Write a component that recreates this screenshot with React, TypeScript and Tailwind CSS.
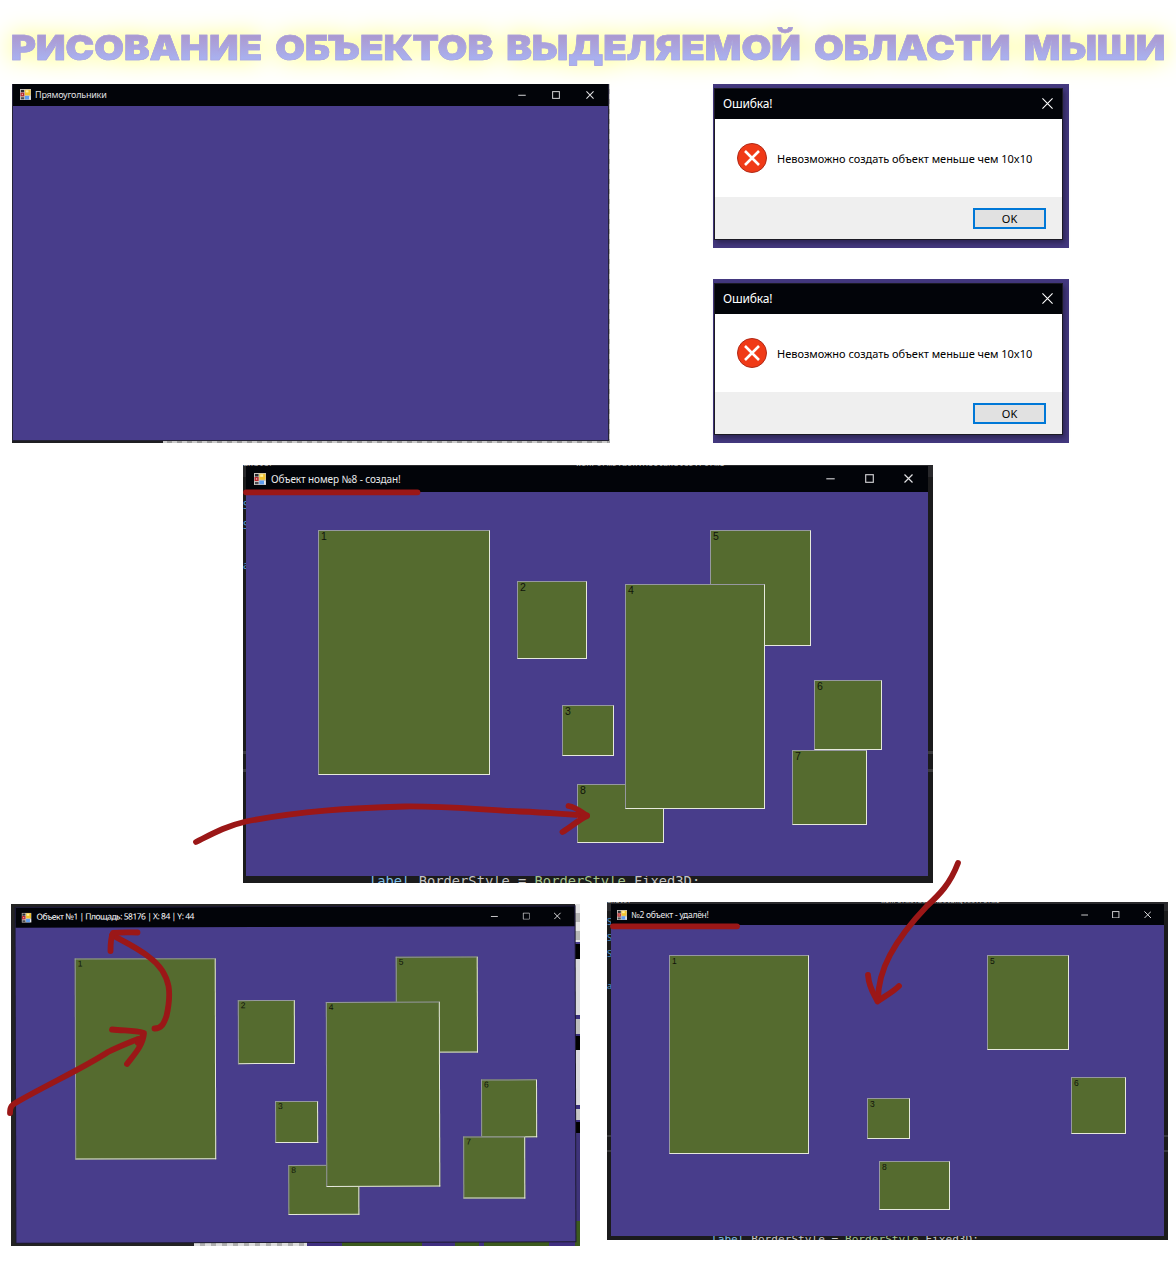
import React from "react";

type Box = { id: number; x: number; y: number; w: number; h: number };

/* Rectangles are positioned relative to the client area of their window. */
const createdBoxes: Box[] = [
  { id: 1, x: 72, y: 38, w: 172, h: 245 },
  { id: 2, x: 271, y: 89, w: 70, h: 78 },
  { id: 3, x: 316, y: 213.4, w: 52.4, h: 51 },
  { id: 5, x: 464, y: 38, w: 101, h: 116 },
  { id: 8, x: 331, y: 292, w: 87, h: 59 },
  { id: 4, x: 379, y: 92, w: 140, h: 225 },
  { id: 6, x: 568, y: 188, w: 68, h: 70 },
  { id: 7, x: 546, y: 258, w: 75, h: 75 },
];

const areaBoxes: Box[] = [
  { id: 1, x: 59, y: 31, w: 141, h: 201 },
  { id: 2, x: 222, y: 73, w: 57, h: 64 },
  { id: 3, x: 259, y: 174, w: 43, h: 42 },
  { id: 5, x: 380, y: 30, w: 82, h: 96 },
  { id: 8, x: 272, y: 238, w: 71, h: 50 },
  { id: 4, x: 310, y: 75, w: 114, h: 185 },
  { id: 6, x: 465, y: 153, w: 56, h: 58 },
  { id: 7, x: 447, y: 210, w: 62, h: 62 },
];

const deletedBoxes: Box[] = [
  { id: 1, x: 58, y: 30, w: 140, h: 199 },
  { id: 3, x: 256, y: 173, w: 43, h: 41 },
  { id: 5, x: 376, y: 30, w: 82, h: 95 },
  { id: 6, x: 460, y: 152, w: 55, h: 57 },
  { id: 8, x: 268, y: 236, w: 71, h: 49 },
];

function FormIcon({ className }: { className: string }) {
  return (
    <svg viewBox="0 0 12 12" className={className}>
      <rect width="12" height="12" fill="#c9c4bd" />
      <rect x="1" y="1" width="3.5" height="2.5" fill="#2a2a30" />
      <rect x="0.6" y="4" width="4" height="4" fill="#b8242c" />
      <rect x="1.9" y="5.2" width="1.3" height="1.5" fill="#f3b6a8" />
      <rect x="1" y="9" width="3.5" height="2.2" fill="#4a4a52" />
      <rect x="5.4" y="0.8" width="6" height="6" rx="0.6" fill="#f2c32e" />
      <rect x="6.2" y="1.4" width="3" height="2.4" fill="#fff0a0" />
      <rect x="5.4" y="7.6" width="4.6" height="3.8" fill="#5d9cf0" />
      <rect x="10.2" y="8" width="1.3" height="3.2" fill="#e8eefb" />
    </svg>
  );
}

function WindowButtons({ size, gap, right }: { size: string; gap: string; right: string }) {
  return (
    <div className={`ml-auto flex items-center ${gap} ${right}`}>
      <svg viewBox="0 0 9 9" className={size} fill="none" stroke="#d0d0d2" strokeWidth="1.15">
        <path d="M0.3 4.8H8.7" />
      </svg>
      <svg viewBox="0 0 9 9" className={size} fill="none" stroke="#d0d0d2" strokeWidth="1.15">
        <rect x="0.7" y="0.7" width="7.6" height="7.6" />
      </svg>
      <svg viewBox="0 0 9 9" className={size} fill="none" stroke="#e2e2e4" strokeWidth="1.15">
        <path d="M0.5 0.5L8.5 8.5M8.5 0.5L0.5 8.5" />
      </svg>
    </div>
  );
}

function Boxes({ boxes, label }: { boxes: Box[]; label: string }) {
  return (
    <>
      {boxes.map((b) => (
        <div
          key={b.id}
          className="absolute border border-t-[#9698a0] border-r-[#e6e9dc] border-b-[#e6e9dc] border-l-[#9698a0] bg-[#556b2f]"
          style={{ left: b.x, top: b.y, width: b.w, height: b.h }}
        >
          <span className={`block font-['Liberation_Sans',sans-serif] text-[#10140a] ${label}`}>{b.id}</span>
        </div>
      ))}
    </>
  );
}

function CodeLine({ className }: { className: string }) {
  return (
    <div className={`absolute whitespace-pre font-['DejaVu_Sans_Mono',monospace] text-[#c4c4c4] ${className}`}>
      <span className="text-[#7fbfe6]">label</span>.BorderStyle = <span className="text-[#a4c28e]">BorderStyle</span>.Fixed3D;
    </div>
  );
}

function ErrorDialog() {
  return (
    <div className="h-[164px] w-[356px] bg-[#43387f] pt-[4px] pl-px">
      <div className="flex h-[152px] w-[349px] flex-col border border-[#1b1a24] bg-white shadow-[2px_3px_5px_rgba(0,0,0,0.35)]">
        <div className="flex h-[30px] shrink-0 items-center bg-[#020409] pr-[9.500px] pl-2">
          <span className="text-[12px] tracking-[-0.16px] text-white">Ошибка!</span>
          <svg viewBox="0 0 10 10" className="mb-px ml-auto h-[11px] w-[11px]" fill="none" stroke="#fff">
            <path d="M0.4 0.4L9.6 9.6M9.6 0.4L0.4 9.6" />
          </svg>
        </div>
        <div className="flex flex-1 items-center pl-[22px]">
          <svg viewBox="0 0 30 30" className="h-[30px] w-[30px] shrink-0">
            <circle cx="15" cy="15" r="14.5" fill="#f03a17" stroke="#b02a18" />
            <path d="M8 8L22 22M22 8L8 22" stroke="#fff" strokeWidth="2.6" />
          </svg>
          <span className="ml-[10px] pt-0.5 text-[11px] tracking-[-0.020px] whitespace-nowrap text-black">Невозможно создать объект меньше чем 10x10</span>
        </div>
        <div className="flex h-[42px] shrink-0 items-start justify-end bg-[#efefef] pt-[11px] pr-4">
          <button className="h-[21px] w-[73px] border-2 border-[#0078d7] bg-[#e1e1e1] text-[11px] leading-[17px] text-black">OK</button>
        </div>
      </div>
    </div>
  );
}

function Annotations() {
  return (
    <svg
      viewBox="0 0 1176 1277"
      className="pointer-events-none absolute top-0 left-0 h-[1277px] w-[1176px]"
      fill="none"
      stroke="#9b1717"
      strokeWidth="5.8"
      strokeLinecap="round"
      strokeLinejoin="round"
    >
      <path d="M246 492.300H417.500" />
      <path d="M613 926.300H737" />
      <path d="M196 842C212 834 226 826 246 821.500C300 811 350 808 405 806.500C450 806 480 810 520 811.500C550 812.500 565 814.500 587 815.500" />
      <path d="M568.500 806C576 807 580 811 587 816C578 820 570 828 562.500 832" />
      <path d="M10 1113C10 1106 12 1105 17 1102C50 1083 80 1070 108 1052C120 1046 128 1043 138 1039" />
      <path d="M112 1029.500C124 1031 134 1030 144 1033C143 1046 133 1056 127 1064M142 1037L138 1043" />
      <path d="M154.500 1028.500C162 1028.500 164 1023 166.500 1016C169 1005 170 995 168.500 986C166 974 160 965 149 957C138 948 125 942 112 935" />
      <path d="M110.500 951C110.500 944 110.500 938 113 933C122 932 130 932.500 137.500 932.500" />
      <path d="M958 863C950 884 940 894 927 906C908 926 898 940 890 955C882 970 878 984 878 1000" />
      <path d="M868 975C869 988 874 994 877.500 1001.500C885 996 893 992 899 986" />
    </svg>
  );
}

export default function App() {
  return (
    <main className="relative flex h-[1277px] w-[1176px] flex-col overflow-hidden bg-white font-['Noto_Sans',sans-serif]">
      <h1 className="flex h-[84px] items-center justify-center pt-[9px] drop-shadow-[0_0_12px_#ffff70]">
        <span className="inline-block scale-x-[1.11] bg-gradient-to-b from-[#ab99d0] from-25% to-[#a9b0ee] to-75% bg-clip-text font-['Inter',sans-serif] text-[34.600px] leading-[44px] font-black tracking-[0px] whitespace-nowrap text-transparent [-webkit-text-stroke:0.6px_#aaa4e0] [word-spacing:5px]">
          РИСОВАНИЕ ОБЪЕКТОВ ВЫДЕЛЯЕМОЙ ОБЛАСТИ МЫШИ
        </span>
      </h1>

      <section className="flex h-[359px] justify-between pr-[107px] pl-3">
        <div className="relative h-[359px] w-[598px] bg-[repeating-linear-gradient(90deg,#c9c9c9_0_5px,#9b9b9b_5px_10px)]">
          <div className="absolute top-0 right-0 h-full w-0.5 bg-[repeating-linear-gradient(180deg,#c9c9c9_0_5px,#a9a9a9_5px_10px)]" />
          <div className="absolute bottom-0 left-0 h-[3px] w-[151px] bg-[#1e1e22]" />
          <div className="relative flex h-[357px] w-[596.500px] flex-col border-r border-b border-l border-[#242236] bg-[#483d8b]">
            <div className="flex h-[22px] shrink-0 items-center bg-[#020409] pb-px pl-[7px]">
              <FormIcon className="h-[11px] w-[11px]" />
              <span className="ml-1 text-[9px] tracking-[-0.220px] text-[#e0e0e2]">Прямоугольники</span>
              <WindowButtons size="h-[8px] w-[8px]" gap="gap-[26px]" right="pr-[13.500px]" />
            </div>
          </div>
        </div>
        <div className="flex flex-col justify-between">
          <ErrorDialog />
          <ErrorDialog />
        </div>
      </section>

      <section className="mt-[22px] ml-[243px] h-[418px] w-[690px]">
        <div className="relative h-full overflow-hidden bg-[#1b1b1c] pt-px pl-[3px]">
          <div className="absolute top-0 left-0 h-3 w-full bg-[#29292c]" />
          <div className="absolute top-[286px] left-0 h-[3px] w-full bg-[#39393c]" />
          <div className="absolute top-[304px] left-0 h-[3px] w-full bg-[#39393c]" />
          <div className="absolute top-[-9px] left-0 font-['DejaVu_Sans_Mono',monospace] text-[8.500px] leading-[14px] text-[#bdbdbd]">andler</div>
          <div className="absolute top-[-9px] left-[333px] font-['DejaVu_Sans_Mono',monospace] text-[8.500px] leading-[14px] text-[#bdbdbd]">WinFormsTask.Rectangles.Form1</div>
          <div className="absolute top-[30px] left-0 w-[3px] overflow-hidden text-[11px] leading-5 text-[#4f93c8]">S<br />S<br /><br />a</div>
          <CodeLine className="top-[408px] left-[126px] text-[13.750px] leading-4" />
          <div className="relative h-[410px] w-[682px] bg-[#483d8b]">
            <div className="flex h-[26px] items-center bg-[#020409] pl-2">
              <FormIcon className="mb-px h-[12px] w-[12px]" />
              <span className="ml-[5px] text-[10px] tracking-[-0.100px] whitespace-nowrap text-[#e9e9eb]">Объект номер №8 - создан!</span>
              <WindowButtons size="h-[9px] w-[9px]" gap="gap-[30px]" right="pb-px pr-[15px]" />
            </div>
            <div className="relative h-[384px]">
              <Boxes boxes={createdBoxes} label="pl-0.5 text-[10.500px] leading-[11px]" />
            </div>
          </div>
        </div>
      </section>

      <section className="mt-[19px] flex items-start pl-[11px]">
        <div className="relative mt-0.5 h-[342px] w-[569px] overflow-hidden bg-[#232323] pt-[3px] pl-[5px]">
          <div className="absolute top-0 right-0 flex h-full w-[5px] flex-col bg-[#d9d9dc]">
            <div className="h-[40px] border-b-2 border-[#483d8b] bg-[repeating-linear-gradient(180deg,#e4e4e4_0_9px,#b5b5b5_9px_18px)]" />
            <div className="h-[15px] bg-black" />
            <div className="h-[56px]" />
            <div className="h-[4px] bg-[#3a2f7c]" />
            <div className="h-[15px] bg-[#bdbdbd]" />
            <div className="h-[16px] border-t-2 border-[#3a2f7c] bg-black" />
            <div className="h-[55px]" />
            <div className="h-[4px] bg-[#3a2f7c]" />
            <div className="h-[11px] bg-[#c6c6c6]" />
            <div className="h-[13px] border-t-2 border-[#3a2f7c] bg-black" />
            <div className="h-[88px] bg-[#3e3379]" />
            <div className="flex-1 bg-[#3c5a1e]" />
          </div>
          <div className="absolute right-[5px] bottom-0 left-[183px] flex h-[5px] bg-[#3f2f80]">
            <div className="w-[113px] bg-[repeating-linear-gradient(90deg,#dedede_0_6px,#b0b0b0_6px_11px)]" />
            <div className="ml-[35px] w-[80px] bg-[#3c5a1e]" />
            <div className="ml-[33px] w-[24px] bg-[#3c5a1e]" />
            <div className="ml-[5px] w-[65px] bg-[#3c5a1e]" />
          </div>
          <div className="relative h-[335px] w-[558.500px] rotate-[-0.15deg] bg-[#483d8b] shadow-[0_0_0_1px_#1d1a30]">
            <div className="flex h-[20px] items-center bg-[#020409] pb-px pl-[6px]">
              <FormIcon className="h-[10px] w-[10px]" />
              <span className="ml-[5px] text-[8.500px] tracking-[-0.500px] whitespace-nowrap text-white">Объект №1 | Площадь: 58176 | X: 84 | Y: 44</span>
              <WindowButtons size="h-[7.500px] w-[7.500px]" gap="gap-[24px]" right="pr-[13px]" />
            </div>
            <div className="relative h-[315px]">
              <Boxes boxes={areaBoxes} label="pl-0.5 text-[8.500px] leading-[9px]" />
            </div>
          </div>
        </div>

        <div className="relative ml-[27px] h-[338px] w-[561px] overflow-hidden bg-[#1b1b1c] pt-0.5 pl-1">
          <div className="absolute top-0 left-0 h-[9px] w-full bg-[#2a2a2d]" />
          <div className="absolute top-[233px] left-0 h-0.5 w-full bg-[#39393c]" />
          <div className="absolute top-[248px] left-0 h-0.5 w-full bg-[#39393c]" />
          <div className="absolute top-[-7px] left-0 font-['DejaVu_Sans_Mono',monospace] text-[6.800px] leading-3 text-[#bdbdbd]">andler</div>
          <div className="absolute top-[-7px] left-[274px] font-['DejaVu_Sans_Mono',monospace] text-[6.800px] leading-3 text-[#bdbdbd]">WinFormsTask.Rectangles.Form1</div>
          <div className="absolute top-[12px] left-0 w-1 overflow-hidden text-[9px] leading-4 text-[#4f93c8]">S<br />S<br />S<br /><br />a</div>
          <CodeLine className="top-[331px] left-[104px] text-[11.130px] leading-[14px]" />
          <div className="relative h-[332px] w-[553px] bg-[#483d8b]">
            <div className="flex h-[21px] items-center bg-[#020409] pl-[6px]">
              <FormIcon className="h-[10px] w-[10px]" />
              <span className="ml-1 pt-px text-[8.500px] tracking-[-0.250px] whitespace-nowrap text-[#e9e9eb]">№2 объект - удалён!</span>
              <WindowButtons size="h-[7.500px] w-[7.500px]" gap="gap-[24px]" right="pr-[13px]" />
            </div>
            <div className="relative h-[311px]">
              <Boxes boxes={deletedBoxes} label="pl-0.5 pt-px text-[8.500px] leading-[9px]" />
            </div>
          </div>
        </div>
      </section>

      <Annotations />
    </main>
  );
}
